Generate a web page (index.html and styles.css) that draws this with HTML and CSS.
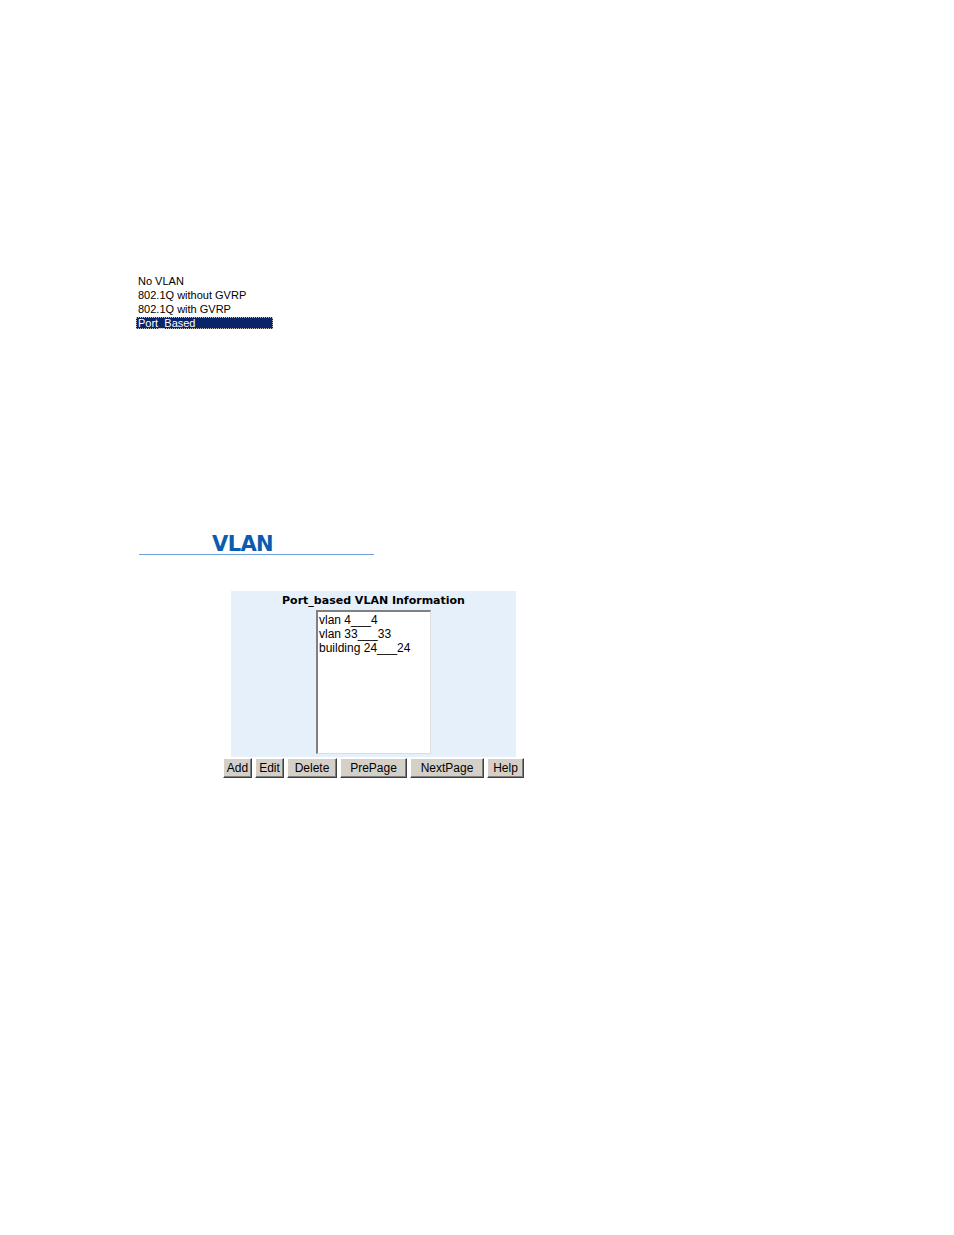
FILE: index.html
```html
<!DOCTYPE html>
<html>
<head>
<meta charset="utf-8">
<link rel="stylesheet" href="styles.css">
</head>
<body>
<div class="page">
  <ul class="modes">
    <li>No VLAN</li>
    <li>802.1Q without GVRP</li>
    <li>802.1Q with GVRP</li>
    <li class="sel">Port_Based</li>
  </ul>

  <div class="logo">
    <div class="logo-text">VLAN</div>
    <div class="logo-line"></div>
  </div>

  <div class="panel">
    <div class="panel-title">Port_based VLAN Information</div>
    <div class="listbox">
      <div>vlan 4___4</div>
      <div>vlan 33___33</div>
      <div>building 24___24</div>
    </div>
  </div>
  <div class="buttons">
    <button class="btn b-add">Add</button>
    <button class="btn b-edit">Edit</button>
    <button class="btn b-del">Delete</button>
    <button class="btn b-pre">PrePage</button>
    <button class="btn b-next">NextPage</button>
    <button class="btn b-help">Help</button>
  </div>
</div>
</body>
</html>
```

FILE: styles.css
```css
html, body {
  margin: 0;
  padding: 0;
  background: #ffffff;
}
.page {
  width: 954px;
  height: 1235px;
  padding-top: 274px;
  box-sizing: border-box;
  font-family: "Liberation Sans", Arial, sans-serif;
  color: #000;
}
.modes {
  list-style: none;
  margin: 0 0 0 136px;
  padding: 0;
  width: 137px;
  font-size: 11px;
}
.modes li {
  height: 14px;
  line-height: 14px;
  padding-left: 2px;
}
.modes li.sel {
  background: #0a246a;
  color: #fff;
  height: 12px;
  line-height: 12px;
  margin-top: 1px;
  outline: 1px dotted #c0c0c0;
  outline-offset: -1px;
}
.logo {
  margin: 205px 0 0 139px;
  width: 235px;
}
.logo-text {
  margin-left: 73px;
  font-family: "DejaVu Sans", sans-serif;
  font-weight: bold;
  font-size: 21px;
  letter-spacing: -0.6px;
  line-height: 20px;
  color: #0b5cae;
}
.logo-line {
  height: 1px;
  background: #6f9fd6;
}
.panel {
  margin: 36px 0 0 231px;
  width: 285px;
  height: 166px;
  background: #e6f0fa;
  box-sizing: border-box;
  padding-top: 3px;
}
.panel-title {
  text-align: center;
  font-family: "DejaVu Sans", Verdana, sans-serif;
  font-weight: bold;
  font-size: 11px;
  line-height: 14px;
  height: 16px;
}
.listbox {
  margin-left: 85px;
  width: 115px;
  height: 144px;
  background: #fff;
  box-sizing: border-box;
  border-top: 2px solid #808080;
  border-left: 2px solid #808080;
  border-right: 1px solid #e0ded8;
  border-bottom: 1px solid #e0ded8;
  padding: 1px 0 0 1px;
  font-size: 12px;
  line-height: 14px;
}
.buttons {
  display: flex;
  margin: 1px 0 0 223px;
}
.btn {
  height: 20px;
  box-sizing: border-box;
  background: #d4d0c8;
  font-family: "Liberation Sans", Arial, sans-serif;
  font-size: 12px;
  color: #000;
  padding: 0;
  border: 1px solid;
  border-color: #ffffff #404040 #404040 #ffffff;
  box-shadow: inset -1px -1px 0 #808080;
  margin-right: 3px;
}
.b-add { width: 29px; }
.b-edit { width: 29px; }
.b-del { width: 50px; }
.b-pre { width: 67px; }
.b-next { width: 74px; }
.b-help { width: 37px; }
```
